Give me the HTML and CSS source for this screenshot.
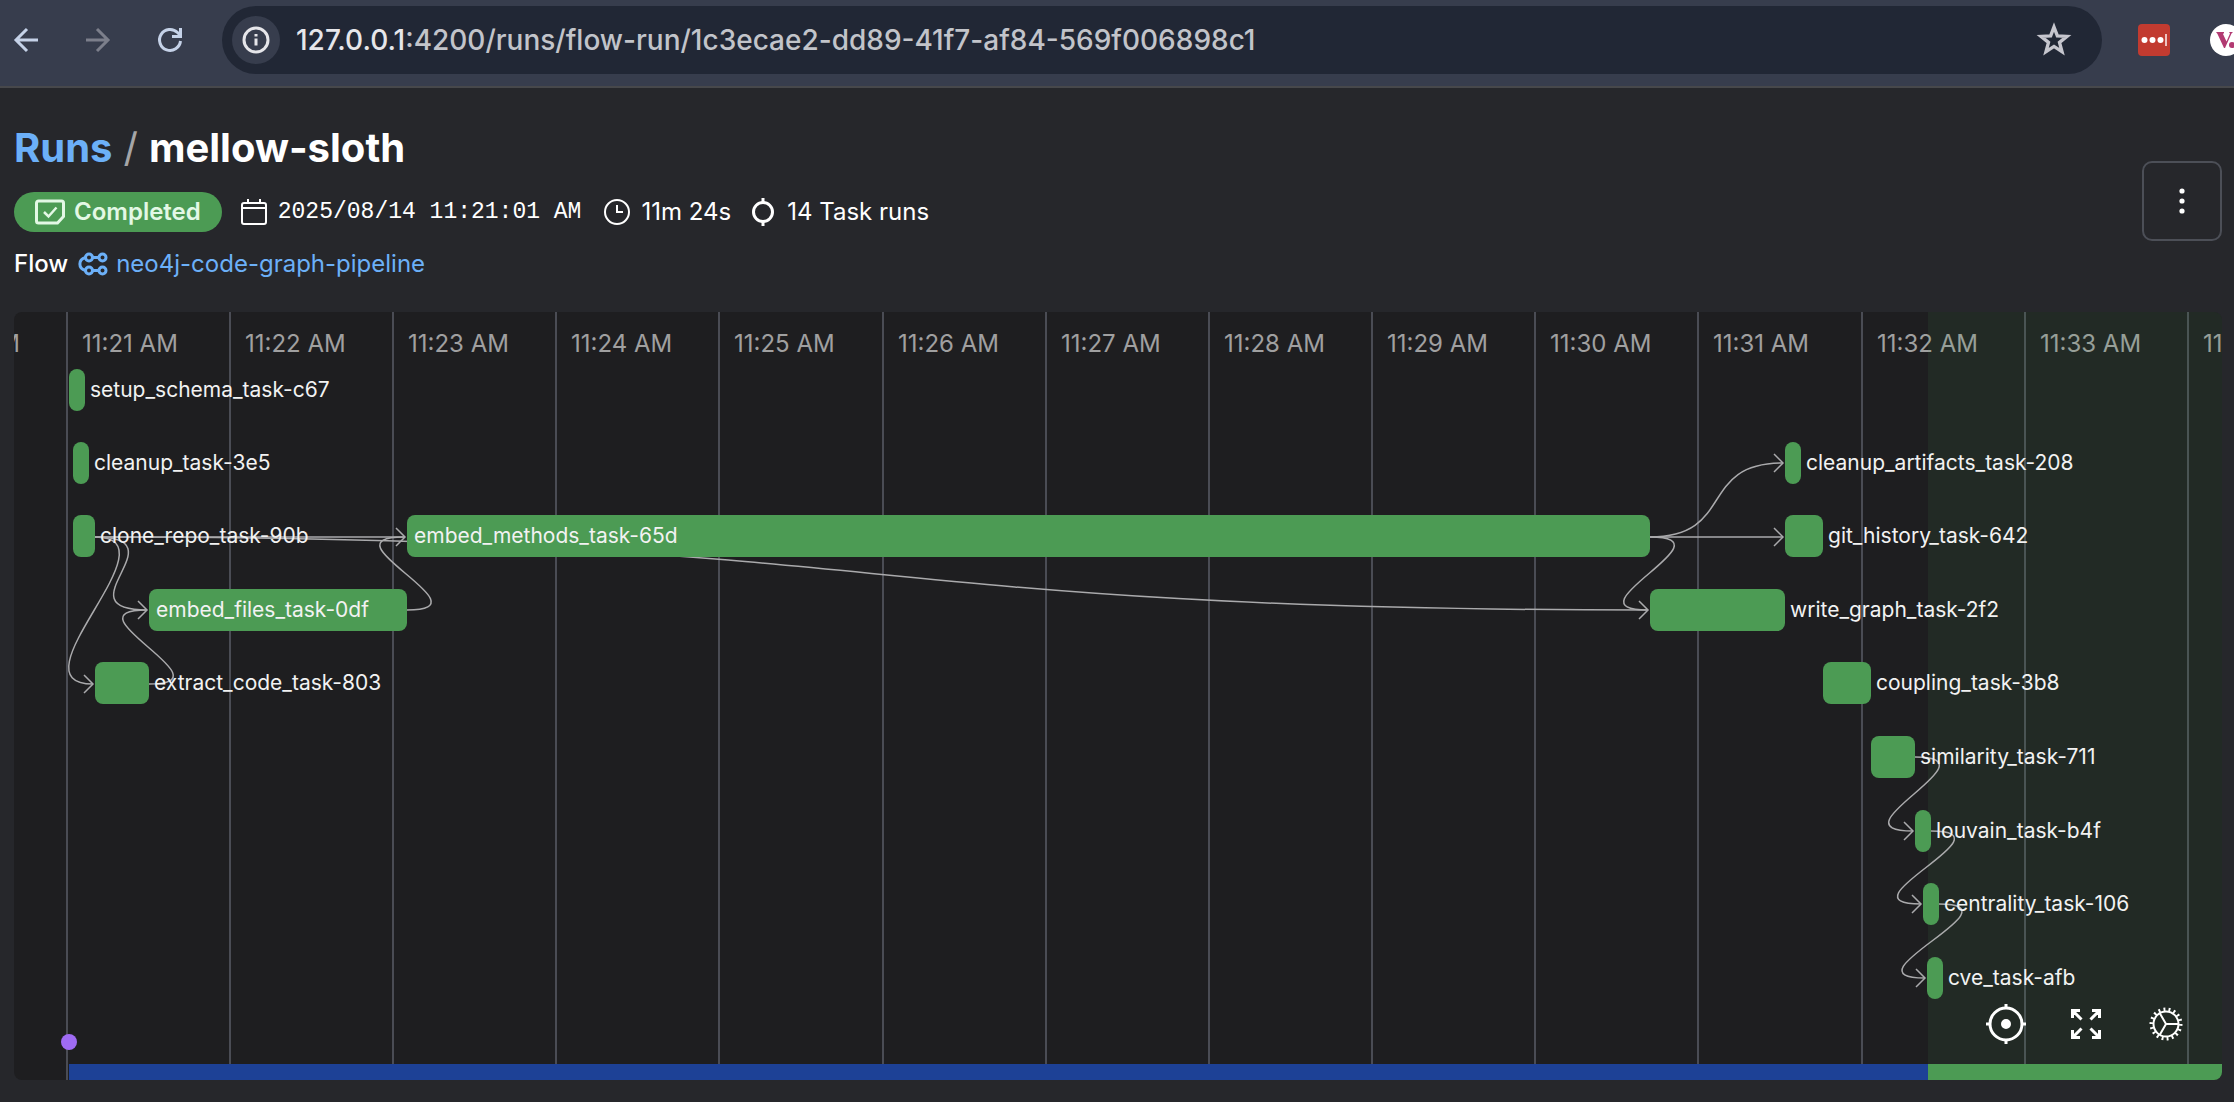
FILE: index.html
```html
<!DOCTYPE html>
<html lang="en">
<head>
<meta charset="utf-8">
<meta name="viewport" content="width=device-width, initial-scale=1">
<title>mellow-sloth</title>
<link rel="stylesheet" href="styles.css">
</head>
<body>
<header class="toolbar">
  <nav class="toolbar-nav" aria-label="Browser">
    <button class="tool" aria-label="Back"><svg class="icon-tool" viewBox="0 0 32 32"><path d="M28 16H6M17 5L6 16l11 11"/></svg></button>
    <button class="tool tool-off" aria-label="Forward"><svg class="icon-tool" viewBox="0 0 32 32"><path d="M4 16h22M15 5l11 11-11 11"/></svg></button>
    <button class="tool" aria-label="Reload"><svg class="icon-tool" viewBox="0 0 32 32"><path d="M26.500 17a10.500 10.500 0 1 1-3-8.500l3 3M26.500 4v8.500H18"/></svg></button>
  </nav>
  <div class="address">
    <button class="site-info" aria-label="Site information"><svg class="icon-info" viewBox="0 0 28 28"><circle cx="14" cy="14" r="12"/><path d="M14 12.500v7M14 8v2.500"/></svg></button>
    <div class="url"><span class="url-host">127.0.0.1</span>:4200/runs/flow-run/1c3ecae2-dd89-41f7-af84-569f006898c1</div>
    <button class="star" aria-label="Bookmark"><svg class="icon-star" viewBox="0 0 32 32"><path d="M16 4.500l3 7.800 8.500.500-6.600 5.300 2.200 8.200-7.100-4.600-7.100 4.600 2.200-8.200-6.600-5.300 8.500-.500z"/></svg></button>
  </div>
  <div class="extensions">
    <button class="ext ext-red" aria-label="Password manager"><svg class="icon-ext" viewBox="0 0 32 32"><circle cx="6.500" cy="16" r="3"/><circle cx="14.500" cy="16" r="3"/><circle cx="22.500" cy="16" r="3"/><path d="M27 10h2v12h-2z" opacity=".7"/></svg></button>
    <button class="ext ext-white" aria-label="Extension"><svg class="icon-ext" viewBox="0 0 32 32"><path d="M6 8h8v1l-1 1 3.500 7.500L20 9.500 19 8h4l-1.500 1.500L15 24h-1L7.500 10z" fill="#b23a72"/><circle cx="22" cy="21" r="3" fill="#b23a72"/></svg></button>
  </div>
</header>

<main class="page">
  <div class="head">
    <div class="head-info">
      <h1 class="crumbs"><a href="#runs">Runs</a><span class="slash">/</span><span>mellow-sloth</span></h1>
      <div class="meta">
        <span class="badge"><svg class="icon-badge" viewBox="0 0 30 26"><path d="M3.500 2h23a2 2 0 0 1 2 2v13.500l-6 6.500h-19a2 2 0 0 1-2-2V4a2 2 0 0 1 2-2z"/><path d="M9 13l4.500 4.500 8-9" stroke-width="2.500"/></svg>Completed</span>
        <span class="meta-item mono"><svg class="icon-meta" viewBox="0 0 28 28"><path d="M4 5h20a2 2 0 0 1 2 2v17a2 2 0 0 1-2 2H4a2 2 0 0 1-2-2V7a2 2 0 0 1 2-2zM2 10h24M8 1v4M20 1v4"/></svg>2025/08/14 11:21:01 AM</span>
        <span class="meta-item"><svg class="icon-meta" viewBox="0 0 28 28"><circle cx="14" cy="14" r="12"/><path d="M14 7v7h6"/></svg>11m 24s</span>
        <span class="meta-item"><svg class="icon-meta icon-task" viewBox="0 0 28 28"><circle cx="14" cy="14" r="9.500"/><path d="M14 0v4.500M14 23.500V28"/></svg>14 Task runs</span>
      </div>
      <div class="flow"><span class="flow-label">Flow</span><a href="#flow"><svg class="icon-flow" viewBox="0 0 30 24"><circle cx="11" cy="5.500" r="3.500"/><circle cx="24.500" cy="5.500" r="3.500"/><circle cx="11" cy="18.500" r="3.500"/><circle cx="24.500" cy="18.500" r="3.500"/><path d="M14.500 5.500H21M14.500 18.500H21M7.500 5.500C0 7.500 0 16.500 7.500 18.500"/></svg>neo4j-code-graph-pipeline</a></div>
    </div>
    <button class="menu" aria-label="More actions"><svg class="icon-menu" viewBox="0 0 28 28"><circle cx="14" cy="4" r="2.600"/><circle cx="14" cy="14" r="2.600"/><circle cx="14" cy="24" r="2.600"/></svg></button>
  </div>

  <section class="timeline" aria-label="Run timeline">
    <div class="scale">
      <div class="tick tick-first"><span>11:20 AM</span></div>
      <div class="tick">11:21 AM</div><div class="tick">11:22 AM</div><div class="tick">11:23 AM</div><div class="tick">11:24 AM</div><div class="tick">11:25 AM</div><div class="tick">11:26 AM</div><div class="tick">11:27 AM</div><div class="tick">11:28 AM</div><div class="tick">11:29 AM</div><div class="tick">11:30 AM</div><div class="tick">11:31 AM</div><div class="tick">11:32 AM</div><div class="tick">11:33 AM</div><div class="tick">11:34 AM</div>
    </div>
    <div class="after-run"></div>
    <svg class="edges" width="2208" height="768" viewBox="0 0 2208 768" aria-hidden="true">
      <path d="M81 225H390"/>
      <path d="M81 225C888 225 827 298 1634 298"/>
      <path d="M81 225C166 225 -6 372 79 372"/>
      <path d="M81 225C169 225 45 298 133 298"/>
      <path d="M135 372C220 372 48 298 133 298"/>
      <path d="M393 298C478 298 305 225 390 225"/>
      <path d="M1636 225C1722 225 1683 151 1769 151"/>
      <path d="M1636 225H1769"/>
      <path d="M1636 225C1721 225 1549 298 1634 298"/>
      <path d="M1901 445C1986 445 1814 519 1899 519"/>
      <path d="M1917 519C2002 519 1822 592 1907 592"/>
      <path d="M1925 592C2010 592 1826 666 1911 666"/>
      <path d="M382 216l9 9-9 9M70 363l9 9-9 9M124 289l9 9-9 9M1760 142l9 9-9 9M1760 216l9 9-9 9M1625 289l9 9-9 9M1890 510l9 9-9 9M1898 583l9 9-9 9M1902 657l9 9-9 9"/>
    </svg>
    <div class="task" style="left:55px;top:57px"><i class="bar" style="width:16px"></i>setup_schema_task-c67</div>
    <div class="task" style="left:59px;top:130px"><i class="bar" style="width:16px"></i>cleanup_task-3e5</div>
    <div class="task" style="left:59px;top:203px"><i class="bar" style="width:22px"></i>clone_repo_task-90b</div>
    <div class="task task-in" style="left:393px;top:203px;width:1243px">embed_methods_task-65d</div>
    <div class="task task-in" style="left:135px;top:277px;width:258px">embed_files_task-0df</div>
    <div class="task" style="left:81px;top:350px"><i class="bar" style="width:54px"></i>extract_code_task-803</div>
    <div class="task" style="left:1771px;top:130px"><i class="bar" style="width:16px"></i>cleanup_artifacts_task-208</div>
    <div class="task" style="left:1771px;top:203px"><i class="bar" style="width:38px"></i>git_history_task-642</div>
    <div class="task" style="left:1636px;top:277px"><i class="bar" style="width:135px"></i>write_graph_task-2f2</div>
    <div class="task" style="left:1809px;top:350px"><i class="bar" style="width:48px"></i>coupling_task-3b8</div>
    <div class="task" style="left:1857px;top:424px"><i class="bar" style="width:44px"></i>similarity_task-711</div>
    <div class="task" style="left:1901px;top:498px"><i class="bar" style="width:16px"></i>louvain_task-b4f</div>
    <div class="task" style="left:1909px;top:571px"><i class="bar" style="width:16px"></i>centrality_task-106</div>
    <div class="task" style="left:1913px;top:645px"><i class="bar" style="width:16px"></i>cve_task-afb</div>
    <div class="event"></div>
    <div class="states"><i class="state-running"></i><i class="state-done"></i></div>
    <div class="controls">
      <button class="control" aria-label="Center"><svg class="icon-control" viewBox="0 0 40 40"><circle cx="20" cy="20" r="16"/><circle cx="20" cy="20" r="3.500" fill="#fff"/><path d="M20 0v5M20 35v5M0 20h5M35 20h5"/></svg></button>
      <button class="control" aria-label="Full screen"><svg class="icon-control" viewBox="0 0 40 40"><path d="M15.500 15.500L7 7M24.500 15.500L33 7M15.500 24.500L7 33M24.500 24.500L33 33M6.500 14V6.500H14M26 6.500h7.500V14M6.500 26v7.500H14M26 33.500h7.500V26"/></svg></button>
      <button class="control" aria-label="Settings"><svg class="icon-control icon-gear" viewBox="0 0 40 40"><circle cx="20" cy="20" r="12.500"/><circle class="teeth" cx="20" cy="20" r="14.500" pathLength="72"/><path d="M20 20h12.500M20 20l-6.200-10.800M20 20l-6.200 10.800"/></svg></button>
    </div>
  </section>
</main>
</body>
</html>
```
FILE: styles.css
```css
* { box-sizing: border-box; }
body {
  margin: 0;
  min-height: 100vh;
  display: flex;
  flex-direction: column;
  background: #26272b;
  color: #fff;
  font: 24px/32px Inter, sans-serif;
  overflow-x: hidden;
}
button { padding: 0; border: 0; background: none; color: inherit; font: inherit; display: flex; align-items: center; justify-content: center; }
a { color: #6cb0f8; text-decoration: none; }
svg { display: block; flex: none; fill: none; stroke: currentColor; stroke-width: 2; }

/* Browser toolbar */
.toolbar {
  display: flex;
  align-items: center;
  height: 88px;
  padding: 0 0 6px;
  background: #373d4d;
  border-bottom: 2px solid #47484b;
  overflow: hidden;
}
.toolbar-nav { display: flex; gap: 40px; padding: 0 36px 0 10px; }
.tool { color: #c5d2e8; width: 32px; }
.tool-off { color: #7c7f8b; }
.icon-tool { width: 32px; height: 32px; stroke-width: 3; }
.address {
  flex: 1;
  height: 68px;
  display: flex;
  align-items: center;
  padding: 0 30px 0 10px;
  border-radius: 34px;
  background: #212735;
}
.site-info { width: 48px; height: 48px; border-radius: 50%; background: #373d4d; color: #e6e6ea; }
.icon-info { width: 28px; height: 28px; stroke-width: 3; }
.url { flex: 1; margin-left: 16px; font-size: 28px; font-weight: 500; color: #c2c4ca; }
.url-host { color: #e6e6ea; }
.star { color: #c6c6ce; }
.icon-star { width: 36px; height: 36px; stroke-width: 3; }
.extensions { display: flex; gap: 40px; margin: 0 -8px 0 36px; }
.ext { width: 32px; height: 32px; }
.ext-red { background: #c23b30; border-radius: 4px; }
.ext-white { background: #fff; border-radius: 50%; }
.icon-ext { width: 32px; height: 32px; fill: #fff; stroke: none; }

/* Run header */
.page { flex: 1; display: flex; flex-direction: column; gap: 34px; padding: 36px 12px 22px 14px; }
.head { display: flex; align-items: center; justify-content: space-between; }
.crumbs { display: flex; gap: 11px; margin: 0; font-size: 40px; line-height: 48px; font-weight: 700; }
.slash { color: #a5a5a7; font-weight: 400; }
.meta { display: flex; align-items: center; gap: 18px; margin-top: 20px; }
.badge {
  display: flex;
  align-items: center;
  gap: 9px;
  height: 40px;
  padding: 0 21px;
  border-radius: 20px;
  background: #4c9b54;
  color: #e3f8e5;
  font-weight: 600;
}
.icon-badge { width: 30px; height: 26px; stroke-width: 3; }
.meta-item { display: flex; align-items: center; gap: 10px; }
.mono { font-family: "Liberation Mono", monospace; font-size: 23px; padding-right: 4px; }
.icon-meta { width: 28px; height: 28px; }
.icon-task { stroke-width: 3; }
.flow { display: flex; align-items: center; gap: 10px; margin-top: 18px; line-height: 28px; }
.flow-label { font-weight: 500; }
.flow a { display: flex; align-items: center; gap: 8px; }
.icon-flow { width: 30px; height: 24px; stroke-width: 3; }
.menu { width: 80px; height: 80px; border: 2px solid #4c4f57; border-radius: 10px; }
.icon-menu { width: 28px; height: 28px; fill: #fff; stroke: none; }

/* Timeline canvas */
.timeline {
  position: relative;
  flex: 1;
  min-height: 768px;
  border-radius: 8px;
  background: #1e1e20;
  overflow: hidden;
}
.scale { display: flex; position: absolute; inset: 0; }
.tick { flex: none; width: 163px; padding: 16px 0 0 14px; border-left: 2px solid #4a4c54; color: #a0a0a0; white-space: nowrap; }
.tick-first { width: 52px; padding-left: 0; border: 0; display: flex; justify-content: flex-end; padding-right: 46px; }
.tick:nth-child(6n) { width: 164px; }
.after-run { position: absolute; top: 0; bottom: 0; left: 1914px; right: 0; background: rgba(76, 155, 84, 0.1); }
.edges { position: absolute; top: 0; left: 0; stroke: #aaaaac; stroke-width: 1.500; }
.task { position: absolute; display: flex; align-items: center; gap: 5px; height: 42px; font-size: 21px; line-height: 42px; white-space: nowrap; color: #f2f2f2; }
.bar { display: block; height: 42px; border-radius: 8px; background: #4c9b54; }
.task-in { padding-left: 7px; border-radius: 8px; background: #4c9b54; }
.event { position: absolute; left: 47px; bottom: 30px; width: 16px; height: 16px; border-radius: 50%; background: #9f6bf3; }
.states { position: absolute; left: 55px; right: 0; bottom: 0; height: 16px; display: flex; }
.state-running { width: 1859px; background: #1d4196; }
.state-done { flex: 1; background: #4c9b54; }
.controls { position: absolute; right: 36px; bottom: 36px; display: flex; gap: 40px; }
.control { width: 40px; height: 40px; }
.icon-control { width: 40px; height: 40px; stroke-width: 3; }
.icon-gear { stroke-width: 2; }
.teeth { stroke-width: 4; stroke-dasharray: 1.500 2.500; }
```
